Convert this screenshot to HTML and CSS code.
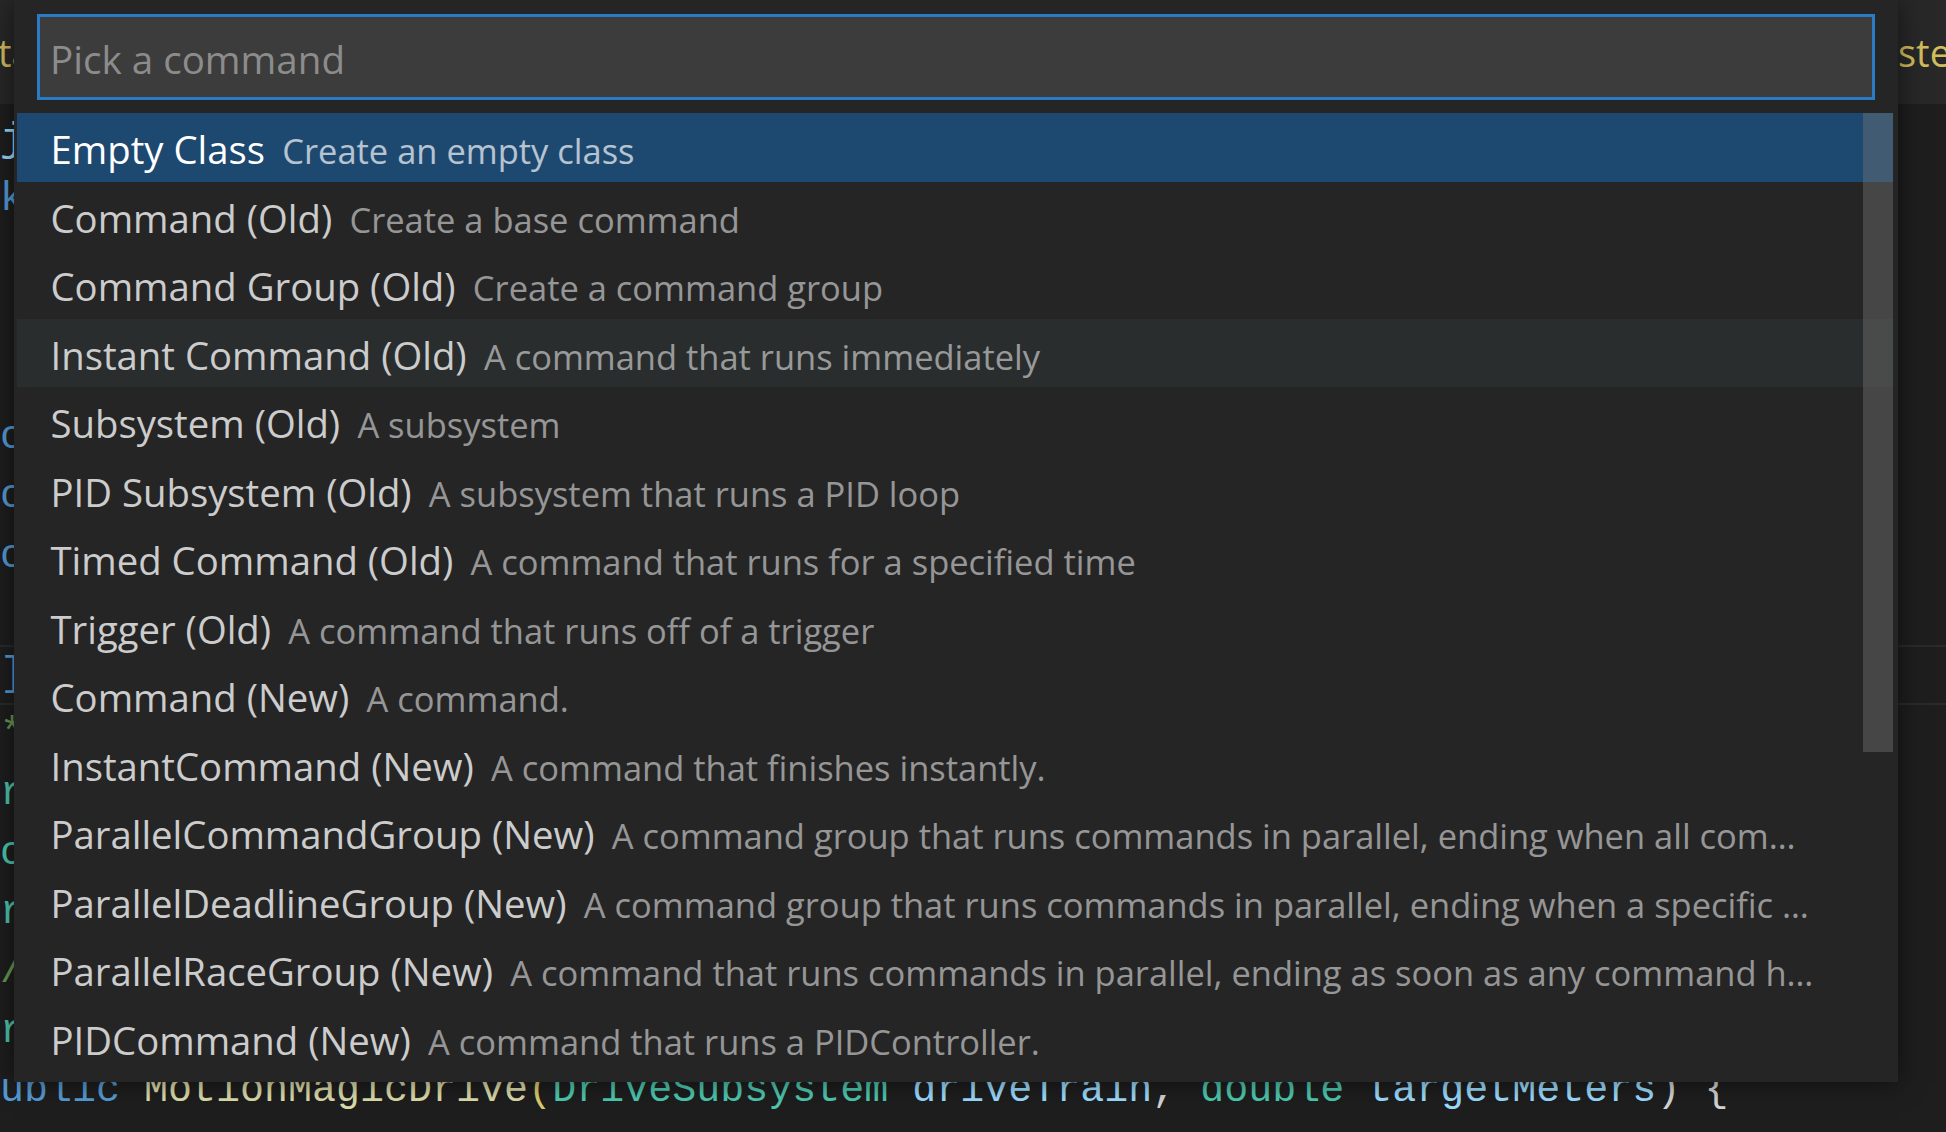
FILE: index.html
```html
<!DOCTYPE html>
<html lang="en">
<head>
<meta charset="utf-8">
<title>Pick a command</title>
<link rel="stylesheet" href="styles.css">
</head>
<body>
<div class="editor">
  <div class="tabs">
    <span class="tab-left">ta</span>
    <span class="tab-spacer"></span>
    <span class="tab-right">ste</span>
  </div>
  <div class="code">
    <div class="line"><span class="c-var">j</span></div>
    <div class="line"><span class="c-kw">k</span></div>
    <div class="line"></div>
    <div class="line"></div>
    <div class="line"></div>
    <div class="line"><span class="c-kw">c</span></div>
    <div class="line"><span class="c-kw">c</span></div>
    <div class="line"><span class="c-kw">c</span></div>
    <div class="line"></div>
    <div class="line current"><span class="c-kw">]</span></div>
    <div class="line"><span class="c-cm">*</span></div>
    <div class="line"><span class="c-type">r</span></div>
    <div class="line"><span class="c-type">c</span></div>
    <div class="line"><span class="c-type">r</span></div>
    <div class="line"><span class="c-cm">/</span></div>
    <div class="line"><span class="c-type">r</span></div>
    <div class="line"><span class="c-kw">ublic</span> <span class="c-fn">MotionMagicDrive</span><span class="c-br">(</span><span class="c-type">DriveSubsystem</span> <span class="c-var">driveTrain</span><span class="c-punc">,</span> <span class="c-type">double</span> <span class="c-var">targetMeters</span><span class="c-punc">)</span> <span class="c-punc">{</span></div>
  </div>
</div>

<div class="quick-input">
  <div class="qi-header">
    <div class="qi-box"><span class="qi-placeholder">Pick a command</span></div>
  </div>
  <div class="qi-list">
    <div class="row selected"><span class="label">Empty Class</span><span class="desc">Create an empty class</span></div>
    <div class="row"><span class="label">Command (Old)</span><span class="desc">Create a base command</span></div>
    <div class="row"><span class="label">Command Group (Old)</span><span class="desc">Create a command group</span></div>
    <div class="row hover"><span class="label">Instant Command (Old)</span><span class="desc">A command that runs immediately</span></div>
    <div class="row"><span class="label">Subsystem (Old)</span><span class="desc">A subsystem</span></div>
    <div class="row"><span class="label">PID Subsystem (Old)</span><span class="desc">A subsystem that runs a PID loop</span></div>
    <div class="row"><span class="label">Timed Command (Old)</span><span class="desc">A command that runs for a specified time</span></div>
    <div class="row"><span class="label">Trigger (Old)</span><span class="desc">A command that runs off of a trigger</span></div>
    <div class="row"><span class="label">Command (New)</span><span class="desc">A command.</span></div>
    <div class="row"><span class="label">InstantCommand (New)</span><span class="desc">A command that finishes instantly.</span></div>
    <div class="row"><span class="label">ParallelCommandGroup (New)</span><span class="desc">A command group that runs commands in parallel, ending when all com…</span></div>
    <div class="row"><span class="label">ParallelDeadlineGroup (New)</span><span class="desc">A command group that runs commands in parallel, ending when a specific …</span></div>
    <div class="row"><span class="label">ParallelRaceGroup (New)</span><span class="desc">A command that runs commands in parallel, ending as soon as any command h…</span></div>
    <div class="row"><span class="label">PIDCommand (New)</span><span class="desc">A command that runs a PIDController.</span></div>
    <div class="scrollbar"></div>
  </div>
</div>
</body>
</html>
```

FILE: styles.css
```css
html, body {
  margin: 0;
  padding: 0;
}

body {
  width: 1946px;
  height: 1132px;
  overflow: hidden;
  position: relative;
  background: #1e1e1e;
  font-family: "Open Sans", "Noto Sans", sans-serif;
}

/* ---------- editor behind the widget ---------- */
.editor {
  display: flex;
  flex-direction: column;
}

.tabs {
  height: 104px;
  background: #282828;
  display: flex;
  align-items: center;
  font-size: 38px;
  color: #d2bd5c;
  white-space: nowrap;
}

.tab-left {
  margin-left: -2px;
}

.tab-spacer {
  flex: 1;
}

.tab-right {
  width: 48px;
}

.code {
  padding-top: 6.9px;
  font-family: "Liberation Mono", "DejaVu Sans Mono", monospace;
  font-size: 40px;
  color: #d4d4d4;
}

.line {
  height: 59.4px;
  line-height: 59.4px;
  white-space: pre;
  box-sizing: border-box;
}

.line.current {
  box-shadow: inset 0 2px 0 #2b2b2b, inset 0 -2px 0 #2b2b2b;
}

.c-kw { color: #569cd6; }
.c-var { color: #9cdcfe; }
.c-type { color: #4ec9b0; }
.c-cm { color: #6a9955; }
.c-fn { color: #dcdcaa; }
.c-br { color: #dccb6e; }
.c-punc { color: #d4d4d4; }

/* ---------- quick input widget ---------- */
.quick-input {
  position: absolute;
  left: 14px;
  top: 0;
  width: 1884px;
  height: 1082px;
  background: #252526;
  box-shadow: 0 0 25px rgba(0, 0, 0, 0.55);
  display: flex;
  flex-direction: column;
}

.qi-header {
  padding: 14px 23px 0 23px;
}

.qi-box {
  height: 86px;
  box-sizing: border-box;
  border: 3px solid #2a7ac4;
  background: #3c3c3c;
  display: flex;
  align-items: center;
  padding-left: 10px;
  padding-top: 4px;
  font-size: 38.6px;
  color: #8c8c8c;
}

.qi-list {
  position: relative;
  margin: 13px 5px 0 3px;
}

.row {
  height: 68.5px;
  line-height: 68.5px;
  padding-left: 33.5px;
  padding-top: 2px;
  box-sizing: border-box;
  white-space: nowrap;
  overflow: hidden;
  font-size: 38.3px;
  color: #cccccc;
}

.row .desc {
  font-size: 0.9em;
  opacity: 0.68;
  margin-left: 0.5em;
}

.row.selected {
  background: #1d4870;
  color: #ffffff;
}

.row.hover {
  background: #2a2d2e;
}

.scrollbar {
  position: absolute;
  top: 0;
  right: 0;
  width: 30px;
  height: 639px;
  background: rgba(121, 121, 121, 0.4);
}
```
